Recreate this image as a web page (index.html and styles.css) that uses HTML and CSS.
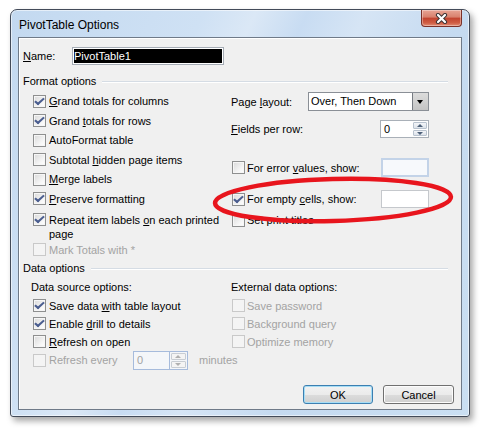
FILE: index.html
```html
<!DOCTYPE html>
<html lang="en">
<head>
  <meta charset="UTF-8">
  <title>PivotTable Options</title>
  <link rel="stylesheet" href="styles.css">
</head>
<body>
  <div class="window">
    <div class="titlebar">
      <span class="title">PivotTable Options</span>
      <span class="close">
        <svg width="17" height="11" viewBox="0 0 17 11">
          <path d="M5 2 L12 9 M12 2 L5 9" stroke="#3e3434" stroke-width="4.2" stroke-linecap="round"/>
          <path d="M5 2 L12 9 M12 2 L5 9" stroke="#fff" stroke-width="2.2" stroke-linecap="round"/>
        </svg>
      </span>
    </div>

    <div class="client">
      <div class="name-row">
        <span class="name-label"><u>N</u>ame:</span>
        <div class="name-input"><span class="sel">PivotTable1</span></div>
      </div>

      <div class="section-head"><span>Format options</span></div>
      <div class="format">
        <div class="col-left">
          <div class="chk"><span class="cb on"></span><span><u>G</u>rand totals for columns</span></div>
          <div class="chk"><span class="cb on"></span><span>Grand <u>t</u>otals for rows</span></div>
          <div class="chk"><span class="cb"></span><span>AutoFormat table</span></div>
          <div class="chk"><span class="cb"></span><span>Subtotal <u>h</u>idden page items</span></div>
          <div class="chk"><span class="cb"></span><span><u>M</u>erge labels</span></div>
          <div class="chk"><span class="cb on"></span><span><u>P</u>reserve formatting</span></div>
          <div class="chk repeat"><span class="cb on"></span>
            <span class="wrap"><span class="line">Repeat item labels <u>o</u>n each printed</span><span class="line">page</span></span>
          </div>
          <div class="chk dis mark"><span class="cb"></span><span>Mark Totals with *</span></div>
        </div>
        <div class="col-right">
          <div class="field r1">
            <span>Page <u>l</u>ayout:</span>
            <div class="select"><span class="select-val">Over, Then Down</span><span class="drop"></span></div>
          </div>
          <div class="field r2">
            <span><u>F</u>ields per row:</span>
            <div class="spin"><span class="spin-val">0</span><span class="spin-btns"><i class="up"></i><i class="down"></i></span></div>
          </div>
          <div class="field r3">
            <div class="chk"><span class="cb"></span><span>For error <u>v</u>alues, show:</span></div>
            <div class="box blue"></div>
          </div>
          <div class="field r4">
            <div class="chk"><span class="cb on"></span><span>For empty <u>c</u>ells, show:</span></div>
            <div class="box"></div>
          </div>
          <div class="chk r5"><span class="cb"></span><span>Set print titles</span></div>
        </div>
      </div>

      <div class="section-head data-head"><span>Data options</span></div>
      <div class="data">
        <div class="data-left">
          <div class="sub">Data source options:</div>
          <div class="chk drow"><span class="cb on"></span><span>Save data <u>w</u>ith table layout</span></div>
          <div class="chk drow"><span class="cb on"></span><span>Enable <u>d</u>rill to details</span></div>
          <div class="chk drow"><span class="cb"></span><span><u>R</u>efresh on open</span></div>
          <div class="chk drow dis every">
            <span class="cb"></span><span class="every-label">Refresh every</span>
            <div class="spin small"><span class="spin-val">0</span><span class="spin-btns"><i class="up"></i><i class="down"></i></span></div>
            <span class="minutes">minutes</span>
          </div>
        </div>
        <div class="data-right">
          <div class="sub">External data options:</div>
          <div class="chk drow dis"><span class="cb"></span><span>Save password</span></div>
          <div class="chk drow dis"><span class="cb"></span><span>Background query</span></div>
          <div class="chk drow dis"><span class="cb"></span><span>Optimize memory</span></div>
        </div>
      </div>

      <div class="buttons">
        <button class="btn default">OK</button>
        <button class="btn">Cancel</button>
      </div>
    </div>
  </div>

  <!-- hand drawn marker round the empty cells option -->
  <svg class="marker" width="482" height="432" viewBox="0 0 482 432">
    <ellipse cx="333" cy="200" rx="118" ry="21" transform="rotate(-1.5 333 200)" fill="none" stroke="#e8151d" stroke-width="4.5"/>
  </svg>
</body>
</html>
```

FILE: styles.css
```css
body {
  margin: 0;
  background: #fff;
  font-family: "Liberation Sans", Arial, sans-serif;
  font-size: 11px;
  color: #000;
  position: relative;
  width: 482px;
  height: 432px;
  overflow: hidden;
}
u {
  text-decoration: underline;
  text-underline-offset: 1px;
}
.window {
  margin: 9px 0 0 10px;
  width: 460px;
  height: 408px;
  box-sizing: border-box;
  border: 1px solid #434b59;
  border-radius: 7px 7px 3px 3px;
  background: linear-gradient(115deg, #c3d9f0 0%, #cfe1f4 30%, #dbe8f6 38%, #c8dcf2 46%, #d6e5f5 55%, #c5daf0 70%, #cadff2 100%);
  box-shadow: inset 0 0 0 1px rgba(255,255,255,.55), 3px 4px 6px rgba(0,0,0,.35);
  padding: 0 7px 6px 7px;
  display: flex;
  flex-direction: column;
}
.titlebar {
  height: 27px;
  display: flex;
  justify-content: space-between;
  align-items: flex-start;
  flex: none;
}
.title {
  font-size: 12px;
  margin: 8px 0 0 1px;
  color: #000;
}
.close {
  width: 41px;
  height: 17px;
  box-sizing: border-box;
  border: 1px solid #7a3129;
  border-top: none;
  border-radius: 0 0 4px 4px;
  background: linear-gradient(#e8a595 0%, #d8806c 45%, #c2432e 50%, #cf5d44 80%, #e28d74 100%);
  box-shadow: inset 0 0 0 1px rgba(255,255,255,.35);
  display: flex;
  align-items: center;
  justify-content: center;
}
.close svg {
  display: block;
}

.client {
  flex: 1;
  background: #f0f0f0;
  border: 1px solid #6f7a88;
  box-shadow: inset 1px 1px 0 #fff;
  padding: 9px 7px 5px 4px;
  display: flex;
  flex-direction: column;
}

.name-row {
  display: flex;
  align-items: center;
  height: 18px;
}
.name-label {
  width: 49px;
}
.name-input {
  width: 152px;
  height: 18px;
  box-sizing: border-box;
  border: 1px solid #a5acb5;
  background: #fff;
  padding: 1px;
}
.sel {
  display: block;
  height: 14px;
  line-height: 14px;
  background: #000;
  color: #fff;
}

.section-head {
  display: flex;
  align-items: center;
  height: 14px;
  line-height: 14px;
  margin-top: 9px;
  margin-right: 6px;
}
.section-head::after {
  content: "";
  flex: 1;
  height: 0;
  border-top: 1px solid #d5dce4;
  border-bottom: 1px solid #fff;
  margin-left: 6px;
  margin-top: 2px;
}
.data-head {
  margin-top: 4px;
}

.format {
  display: flex;
  margin-top: 4px;
}
.col-left {
  width: 198px;
  padding: 2px 0 0 10px;
  display: flex;
  flex-direction: column;
  gap: 5.5px;
}
.col-right {
  width: 198px;
  display: flex;
  flex-direction: column;
}

.chk {
  display: flex;
  align-items: flex-start;
  line-height: 14px;
  gap: 3px;
}
.chk .wrap {
  width: 175px;
}
.wrap .line {
  display: block;
  white-space: nowrap;
}
.repeat {
  margin-top: 1.5px;
}
.mark {
  margin-top: -3.5px;
}
.dis {
  color: #a3a3a3;
}

.cb {
  flex: none;
  width: 13px;
  height: 13px;
  box-sizing: border-box;
  margin-top: 0.5px;
  border: 1px solid #8e8f8f;
  background: linear-gradient(135deg, #d9d9d9, #f7f7f7 70%, #fff);
  box-shadow: inset 0 0 0 1px #f6f6f6;
  position: relative;
}
.cb.on::after {
  content: "";
  position: absolute;
  left: 3px;
  top: 0;
  width: 3px;
  height: 7px;
  border: solid #4a5d8f;
  border-width: 0 2px 2px 0;
  transform: rotate(40deg) skewX(-8deg);
}
.dis .cb {
  border-color: #c9c9c9;
  background: #f4f4f4;
  box-shadow: none;
}

.field {
  display: flex;
  align-items: center;
  justify-content: space-between;
}
.r1 {
  height: 19px;
}
.r2 {
  height: 18px;
  margin-top: 9px;
}
.r3 {
  height: 19px;
  margin-top: 20px;
}
.r4 {
  height: 18px;
  margin-top: 13px;
}
.r3 .chk,
.r4 .chk,
.r5 {
  padding-left: 1px;
  gap: 2px;
}
.r5 {
  margin-top: 5px;
}

.select {
  width: 121px;
  height: 19px;
  box-sizing: border-box;
  border: 1px solid #8a8f96;
  background: #fff;
  display: flex;
  align-items: stretch;
}
.select-val {
  flex: 1;
  line-height: 17px;
  padding-left: 2px;
}
.drop {
  width: 15px;
  border-left: 1px solid #767b82;
  background: linear-gradient(#dcdcdc, #c4c4c4);
  position: relative;
}
.drop::after {
  content: "";
  position: absolute;
  left: 4px;
  top: 7px;
  border-left: 3.5px solid transparent;
  border-right: 3.5px solid transparent;
  border-top: 4px solid #000;
}

.spin {
  flex: none;
  width: 49px;
  height: 18px;
  box-sizing: border-box;
  border: 1px solid #a9b0b8;
  background: #fff;
  display: flex;
}
.spin-val {
  flex: 1;
  line-height: 16px;
  padding-left: 3px;
}
.spin-btns {
  width: 15px;
  display: flex;
  flex-direction: column;
  gap: 1px;
  padding: 1px 1px 1px 0;
  box-sizing: border-box;
}
.spin-btns i {
  flex: 1;
  border: 1px solid #b8c2ce;
  border-radius: 1px;
  background: linear-gradient(#f3f5f8, #dde3ea);
  position: relative;
}
.spin-btns i::after {
  content: "";
  position: absolute;
  left: 3px;
  border-left: 3px solid transparent;
  border-right: 3px solid transparent;
}
.spin-btns .up::after {
  top: 1px;
  border-bottom: 3px solid #4d6079;
}
.spin-btns .down::after {
  top: 1px;
  border-top: 3px solid #4d6079;
}

.box {
  width: 48px;
  height: 18px;
  box-sizing: border-box;
  border: 1px solid #c5c8cc;
  background: #fff;
}
.box.blue {
  height: 19px;
  border: 2px solid #c3d3e8;
  background: #f7f9fc;
}

.data {
  display: flex;
  margin-top: 5px;
}
.data-left {
  width: 200px;
  padding-left: 8px;
}
.data-right {
  width: 200px;
}
.sub {
  line-height: 14px;
  margin-bottom: 3px;
}
.drow {
  height: 18px;
  align-items: center;
  padding-left: 2px;
}
.data-right .drow {
  padding-left: 1px;
  gap: 2px;
}
.every {
  height: 19px;
  white-space: nowrap;
}
.every > * {
  flex: none;
}
.every-label {
  width: 81px;
}
.spin.small {
  width: 55px;
  height: 19px;
  border-color: #a6bbdc;
  background: #f4f6f9;
}
.spin.small .spin-val {
  line-height: 17px;
  color: #a3a3a3;
  border-right: 1px solid #a6bbdc;
}
.spin.small .spin-btns {
  width: 17px;
  padding: 1px;
}
.spin.small .spin-btns i {
  border-color: #c8cdd3;
  background: #f4f4f4;
}
.spin.small .spin-btns i::after {
  border-bottom-color: #b0b0b0;
  border-top-color: #b0b0b0;
}
.minutes {
  margin-left: 8px;
}

.buttons {
  display: flex;
  justify-content: flex-end;
  gap: 10px;
  margin-top: auto;
}
.btn {
  font-family: "Liberation Sans", Arial, sans-serif;
  font-size: 11px;
  color: #000;
  height: 19px;
  padding: 0;
  border: 1px solid #707070;
  border-radius: 3px;
  background: linear-gradient(#f2f2f2 0%, #ebebeb 50%, #dddddd 50%, #cfcfcf 100%);
  box-shadow: inset 0 0 0 1px #fcfcfc;
}
.btn.default {
  width: 70px;
  border-color: #3c7fb1;
  box-shadow: inset 0 0 0 1px #a6ddf5;
}
.btn:not(.default) {
  width: 71px;
}

.marker {
  position: absolute;
  left: 0;
  top: 0;
  pointer-events: none;
}
```
